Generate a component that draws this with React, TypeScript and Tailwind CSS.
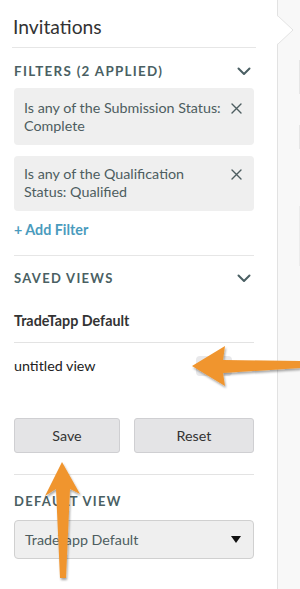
import React from "react";

const Chevron = () => (
  <svg width="14" height="9" viewBox="0 0 14 9" className="shrink-0">
    <path d="M1.5 1.5 L7 7 L12.5 1.5" fill="none" stroke="#4a5f63" strokeWidth="2" strokeLinecap="round" strokeLinejoin="round" />
  </svg>
);

const XIcon = () => (
  <svg width="11" height="11" viewBox="0 0 11 11" className="shrink-0 mt-[4px]">
    <path d="M1 1 L10 10 M10 1 L1 10" fill="none" stroke="#4d5d60" strokeWidth="1.4" strokeLinecap="round" />
  </svg>
);

export default function App() {
  return (
    <div
      className="relative w-[300px] h-[589px] overflow-hidden bg-[#f8f8f8] flex"
      style={{ fontFamily: "Lato, 'Open Sans', sans-serif" }}
    >
      {/* Left panel */}
      <div className="w-[278px] h-full bg-white border-r border-[#e2e2e2] shrink-0 pl-[14px] pr-[23px]">
        <div className="h-[48px] flex items-center border-b border-[#e6e6e6] -ml-[2px] -mr-[2px] pl-[1px] pt-[7px]">
          <span className="text-[19.3px] text-[#333]">Invitations</span>
        </div>

        <div className="h-[40px] flex items-center justify-between pt-[6px]">
          <span className="text-[13.4px] font-bold tracking-[1.3px] text-[#4a5f63]">FILTERS (2 APPLIED)</span>
          <div className="mr-[3px]"><Chevron /></div>
        </div>

        <div className="bg-[#efefef] rounded-[4px] h-[57px] pl-[10px] pr-[12px] pt-[11px] flex justify-between">
          <div className="text-[14.3px] leading-[18px] text-[#4d5d60]">
            Is any of the Submission Status:<br />Complete
          </div>
          <XIcon />
        </div>

        <div className="bg-[#efefef] rounded-[4px] mt-[11px] h-[55px] pl-[10px] pr-[12px] pt-[9px] flex justify-between">
          <div className="text-[14.3px] leading-[18px] text-[#4d5d60]">
            Is any of the Qualification<br />Status: Qualified
          </div>
          <XIcon />
        </div>

        <div className="h-[44px] pt-[6px]">
          <span className="text-[14.3px] leading-[18px] font-bold text-[#4a9bbd]">+ Add Filter</span>
        </div>

        <div className="border-t border-[#e6e6e6] h-[44px] flex items-center justify-between pt-[2px]">
          <span className="text-[13px] font-bold tracking-[1.3px] text-[#4a5f63]">SAVED VIEWS</span>
          <div className="mr-[3px]"><Chevron /></div>
        </div>

        <div className="h-[44px] flex items-center border-b border-[#e3e3e3]">
          <span className="text-[14.3px] font-bold text-[#333]">TradeTapp Default</span>
        </div>

        <div className="h-[46px] flex items-center justify-between">
          <span className="text-[14.3px] text-[#222]">untitled view</span>
          <div className="w-[36px] h-[20px] rounded-[4px] bg-[#e8e8ea] mr-[22px]" />
        </div>

        <div className="flex justify-between mt-[29px]">
          <div className="w-[106px] h-[35px] rounded-[3px] bg-[#e4e4e6] border border-[#cfcfd2] flex items-center justify-center text-[14.3px] text-[#333]">
            Save
          </div>
          <div className="w-[120px] h-[35px] rounded-[3px] bg-[#e4e4e6] border border-[#cfcfd2] flex items-center justify-center text-[14.3px] text-[#333]">
            Reset
          </div>
        </div>

        <div className="border-t border-[#e3e3e3] mt-[21px] h-[45px] flex items-center pt-[9px]">
          <span className="text-[13px] font-bold tracking-[1.3px] text-[#4a5f63]">DEFAULT VIEW</span>
        </div>

        <div className="mt-[1px] h-[39px] rounded-[4px] bg-[#efefef] border border-[#d0d0d0] flex items-center justify-between pl-[10px] pr-[12px]">
          <span className="text-[14.3px] text-[#4d5d60]">TradeTapp Default</span>
          <svg width="10" height="7" viewBox="0 0 10 7"><path d="M0 0 H10 L5 7 Z" fill="#111" /></svg>
        </div>
      </div>

      {/* Right area */}
      <div className="flex-1 relative">
        <div className="absolute right-0 top-[60px] h-[34px] border-r border-[#e6e6e6]" />
        <div className="absolute right-0 top-[125px] h-[24px] border-r border-[#e6e6e6]" />
        <div className="absolute right-0 top-[206px] h-[60px] border-r border-[#ececec]" />
      </div>

      {/* Notch on panel edge */}
      <svg className="absolute left-[277px] top-[15px]" width="18" height="30" viewBox="0 0 18 30">
        <path d="M0.5 0.5 L16 15 L0.5 29.5" fill="#ffffff" stroke="#e2e2e2" strokeWidth="1" />
        <rect x="0" y="1.5" width="1.2" height="27" fill="#ffffff" />
      </svg>

      {/* Orange arrows overlay */}
      <svg className="absolute left-0 top-0 pointer-events-none" width="300" height="589" viewBox="0 0 300 589">
        <defs>
          <filter id="sh" x="-20%" y="-20%" width="140%" height="140%">
            <feDropShadow dx="1" dy="2" stdDeviation="1.2" floodColor="#000" floodOpacity="0.35" />
          </filter>
        </defs>
        <path
          d="M192 366 L225 346 L223 360 L300 361 L300 368 L223 373 L225 386 Z"
          fill="#f0952e"
          filter="url(#sh)"
        />
        <path
          d="M62 462 L80 494 L70 489 L66 578 L60 578 L56 489 L45 496 Z"
          fill="#f0952e"
          filter="url(#sh)"
        />
      </svg>
    </div>
  );
}
